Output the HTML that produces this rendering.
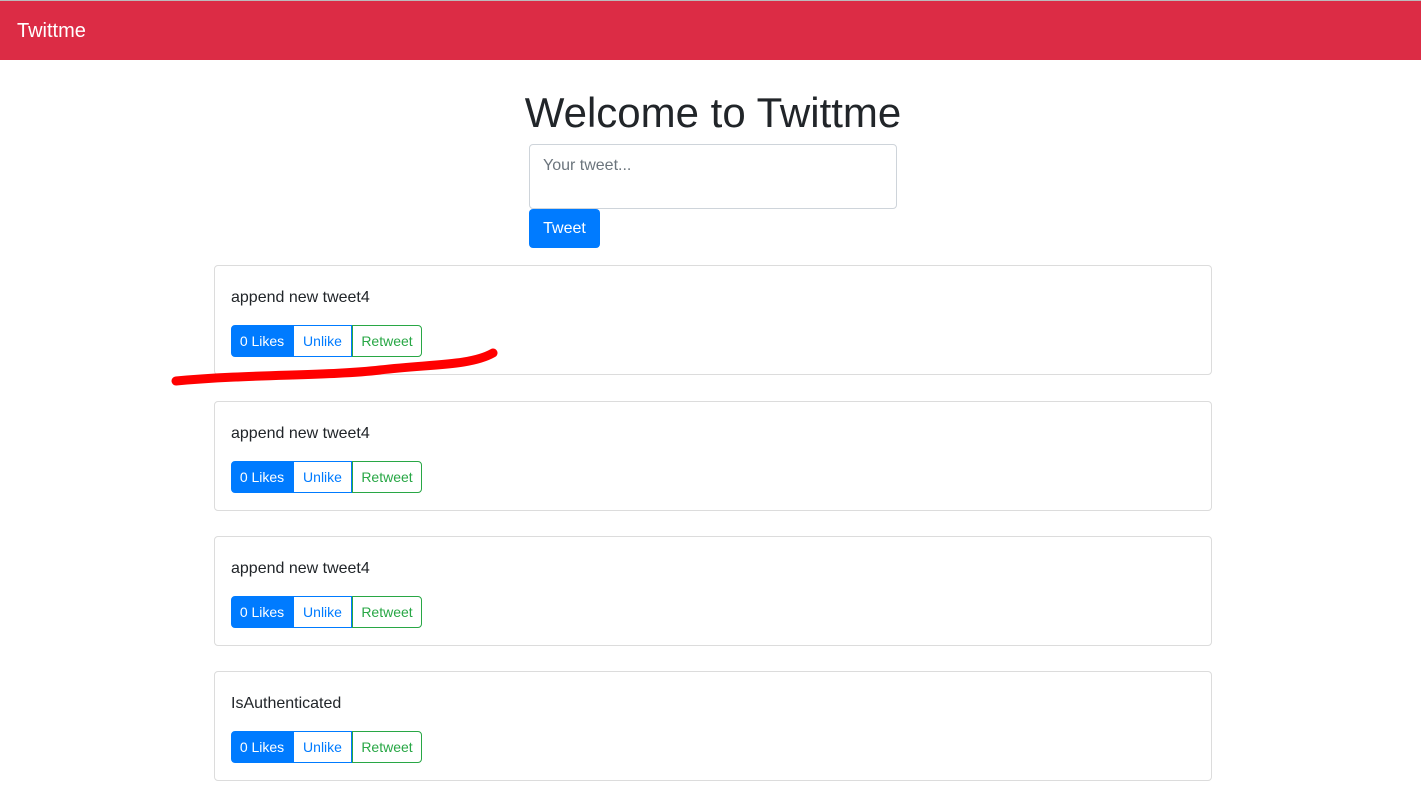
<!DOCTYPE html>
<html><head><style>
*{box-sizing:border-box;margin:0;padding:0}
body{width:1421px;height:805px;background:#fff;font-family:"Liberation Sans",sans-serif;color:#212529;position:relative;overflow:hidden}
.nav{position:absolute;top:0;left:0;width:1421px;height:60px;background:#dc2c45;border-top:1px solid #bbb}
.nav span{position:absolute;left:17px;top:19px;color:#fff;font-size:20px}
h1{position:absolute;top:89px;left:0;width:1426px;text-align:center;font-weight:400;font-size:42px}
.ta{position:absolute;left:529px;top:144px;width:368px;height:65px;border:1px solid #ced4da;border-radius:4px;color:#6c757d;font-size:16px;padding:12px 13px}
.tw{position:absolute;left:529px;top:209px;width:71px;height:39px;background:#007bff;border-radius:4px;color:#fff;font-size:16px;text-align:center;line-height:40px}
.card{position:absolute;left:214px;width:998px;height:110px;border:1px solid #dcdcdc;border-radius:4px}
.card p{position:absolute;left:16px;top:23px;font-size:16px}
.b{position:absolute;top:59px;height:32px;font-size:14px;line-height:31px;text-align:center;border:1px solid}
.l{left:16px;width:62px;background:#007bff;border-color:#007bff;color:#fff;border-radius:4px 0 0 4px}
.u{left:78px;width:59px;border-color:#007bff;color:#007bff}
.r{left:137px;width:70px;border-color:#28a745;color:#28a745;border-radius:0 4px 4px 0}
</style></head><body>
<div class="nav"><span>Twittme</span></div>
<h1>Welcome to Twittme</h1>
<div class="ta">Your tweet...</div>
<div class="tw">Tweet</div>
<div class="card" style="top:265px"><p>append new tweet4</p><div class="b l">0 Likes</div><div class="b u">Unlike</div><div class="b r">Retweet</div></div>
<div class="card" style="top:401px"><p>append new tweet4</p><div class="b l">0 Likes</div><div class="b u">Unlike</div><div class="b r">Retweet</div></div>
<div class="card" style="top:536px"><p>append new tweet4</p><div class="b l">0 Likes</div><div class="b u">Unlike</div><div class="b r">Retweet</div></div>
<div class="card" style="top:671px"><p>IsAuthenticated</p><div class="b l">0 Likes</div><div class="b u">Unlike</div><div class="b r">Retweet</div></div>
<svg style="position:absolute;left:0;top:0" width="1421" height="805"><path d="M176 381 C250 374 330 376 380 370 C430 364 470 366 493 353" stroke="#f00" stroke-width="9" fill="none" stroke-linecap="round"/></svg>
</body></html>
